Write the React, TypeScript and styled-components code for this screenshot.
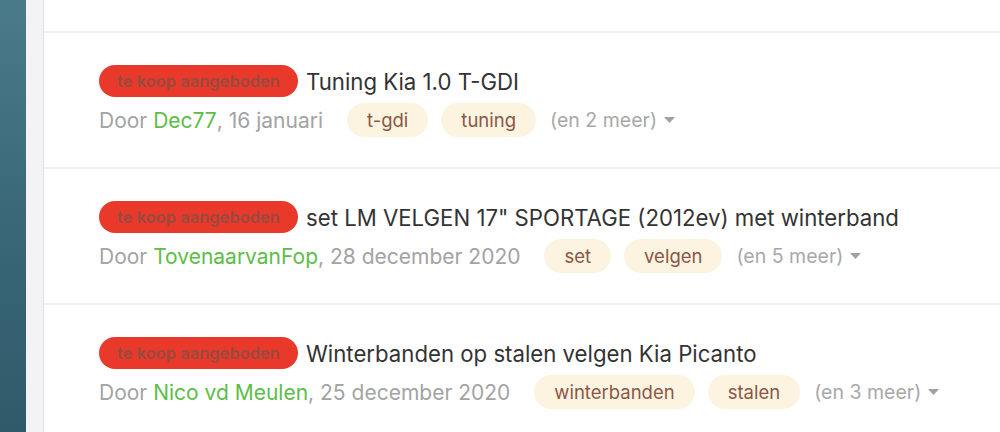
import React from "react";
import styled, { createGlobalStyle } from "styled-components";

const Global = createGlobalStyle`
  html, body { margin: 0; padding: 0; background: #fff; }
  body { font-family: Inter, "Helvetica Neue", Arial, sans-serif; -webkit-font-smoothing: antialiased; }
`;

const Page = styled.div`
  display: flex;
  width: 1000px;
  height: 432px;
  overflow: hidden;
`;

const Sidebar = styled.div`
  width: 26px;
  flex: none;
  background: linear-gradient(180deg, #4a7b8b 0%, #3a6878 50%, #2f5a6a 100%);
`;

const Gutter = styled.div`
  width: 17px;
  flex: none;
  background: #f3f3f5;
  border-right: 1px solid #e2e2e4;
`;

const Main = styled.div`
  flex: 1;
  display: flex;
  flex-direction: column;
  background: #fff;
`;

const TopArea = styled.div`
  height: 31px;
  border-bottom: 2px solid #f1f1f1;
  flex: none;
`;

const Row = styled.div`
  height: 136px;
  flex: none;
  box-sizing: border-box;
  padding: 32px 0 0 55px;
  border-bottom: 2px solid #f1f1f1;
  display: flex;
  flex-direction: column;
  gap: 6px;
`;

const TitleLine = styled.div`
  display: flex;
  align-items: center;
  gap: 8px;
  height: 32px;
`;

const Badge = styled.span`
  display: inline-flex;
  align-items: center;
  justify-content: center;
  height: 32px;
  width: 199px;
  box-sizing: border-box;
  border-radius: 16px;
  background: #e8392b;
  color: #984a40;
  font-size: 16.5px;
  font-weight: 600;
  white-space: nowrap;
`;

const Title = styled.span`
  font-size: 22.2px;
  color: #333;
  white-space: nowrap;
`;

const MetaLine = styled.div`
  display: flex;
  align-items: center;
  height: 34px;
  font-size: 21px;
  color: #a3a3a3;
  white-space: nowrap;
`;

const Author = styled.span`
  color: #5cbd48;
`;

const Tags = styled.div`
  display: flex;
  gap: 13px;
  margin-left: 24px;
  margin-right: 14px;
`;

const Tag = styled.span`
  display: inline-flex;
  align-items: center;
  height: 34px;
  padding: 0 20px;
  border-radius: 17px;
  background: #fdf3e1;
  color: #8b5745;
  font-size: 18.5px;
`;

const More = styled.span`
  display: inline-flex;
  align-items: center;
  gap: 7px;
  font-size: 19.5px;
  color: #a8a8a8;
`;

const Caret = () => (
  <svg width="11" height="6" viewBox="0 0 11 6">
    <path d="M0 0 L11 0 L5.5 6 Z" fill="#a0a0a0" />
  </svg>
);

type Item = { title: string; author: string; date: string; tags: string[]; more: number };

const items: Item[] = [
  { title: "Tuning Kia 1.0 T-GDI", author: "Dec77", date: "16 januari", tags: ["t-gdi", "tuning"], more: 2 },
  {
    title: 'set LM VELGEN 17" SPORTAGE (2012ev) met winterband',
    author: "TovenaarvanFop",
    date: "28 december 2020",
    tags: ["set", "velgen"],
    more: 5,
  },
  {
    title: "Winterbanden op stalen velgen Kia Picanto",
    author: "Nico vd Meulen",
    date: "25 december 2020",
    tags: ["winterbanden", "stalen"],
    more: 3,
  },
];

export default function App() {
  return (
    <>
      <Global />
      <Page>
        <Sidebar />
        <Gutter />
        <Main>
          <TopArea />
          {items.map((it) => (
            <Row key={it.title}>
              <TitleLine>
                <Badge>te koop aangeboden</Badge>
                <Title>{it.title}</Title>
              </TitleLine>
              <MetaLine>
                Door&nbsp;<Author>{it.author}</Author>, {it.date}
                <Tags>
                  {it.tags.map((t) => (
                    <Tag key={t}>{t}</Tag>
                  ))}
                </Tags>
                <More>
                  (en {it.more} meer) <Caret />
                </More>
              </MetaLine>
            </Row>
          ))}
        </Main>
      </Page>
    </>
  );
}
